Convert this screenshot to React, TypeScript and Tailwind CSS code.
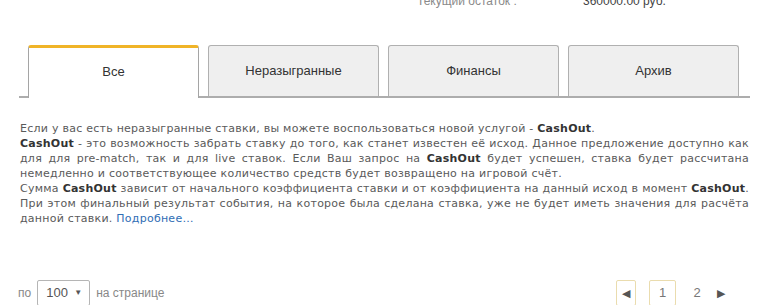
import * as React from "react"

const tabs = [
  { name: "Все", active: true },
  { name: "Неразыгранные", active: false },
  { name: "Финансы", active: false },
  { name: "Архив", active: false },
] as const

function B({ children }: { children: React.ReactNode }) {
  return <b className="font-bold text-[#333]">{children}</b>
}

export default function App() {
  return (
    <div className="h-[305px] w-[770px] overflow-hidden bg-white font-['Liberation_Sans',Arial,sans-serif]">
      {/* balance */}
      <div className="-mt-[7px] flex h-[16px] items-center text-[12px] leading-[16px]">
        <span className="ml-[417px] w-[166px] text-[#8a8a8a]">Текущий остаток :</span>
        <span className="text-[#444]">360000.00 руб.</span>
      </div>

      {/* tabs */}
      <div className="mx-[19px] mt-[37px] flex h-[52px] w-[731px] items-end gap-[9px] border-b-2 border-[#adadad] pl-[9px]">
        {tabs.map((tab) =>
          tab.active ? (
            <div
              key={tab.name}
              className="-mb-[2px] flex h-[53px] w-[171px] items-center justify-center rounded-t-[3px] border-x border-t-[3px] border-x-[#a5a5a5] border-t-[#f0b428] bg-white pb-[2px] text-[13px] text-[#333]"
            >
              {tab.name}
            </div>
          ) : (
            <div
              key={tab.name}
              className="flex h-[51px] w-[171px] items-center justify-center rounded-t-[3px] border border-b-0 border-[#b0b0b0] bg-[#efefef] text-[13px] text-[#333]"
            >
              {tab.name}
            </div>
          )
        )}
      </div>

      {/* description */}
      <div className="ml-[20px] mt-[23px] w-[729px] font-['DejaVu_Sans',Verdana,sans-serif] text-[11px] leading-[15px] tracking-[0.25px] text-[#5a5a5a]">
        <div>
          Если у вас есть неразыгранные ставки, вы можете воспользоваться новой услугой - <B>CashOut</B>.
        </div>
        <div className="text-justify [text-align-last:justify]">
          <B>CashOut</B> - это возможность забрать ставку до того, как станет известен её исход. Данное предложение доступно как
        </div>
        <div className="text-justify [text-align-last:justify]">
          для для pre-match, так и для live ставок. Если Ваш запрос на <B>CashOut</B> будет успешен, ставка будет рассчитана
        </div>
        <div>немедленно и соответствующее количество средств будет возвращено на игровой счёт.</div>
        <div className="text-justify [text-align-last:justify]">
          Сумма <B>CashOut</B> зависит от начального коэффициента ставки и от коэффициента на данный исход в момент <B>CashOut</B>.
        </div>
        <div className="text-justify [text-align-last:justify]">
          При этом финальный результат события, на которое была сделана ставка, уже не будет иметь значения для расчёта
        </div>
        <div>
          данной ставки. <a className="text-[#2f6db5]">Подробнее…</a>
        </div>
      </div>

      {/* footer */}
      <div className="mt-[54px] flex items-start justify-between pl-[18px] pr-[45px]">
        <div className="flex items-center gap-[6px] text-[12px] text-[#888]">
          <span>по</span>
          <span className="flex h-[26px] w-[53px] items-center justify-between rounded-[2px] border border-[#b5b5b5] pl-[8px] pr-[7px] text-[13px] text-[#555]">
            100
            <span className="text-[8px] text-[#555]">▼</span>
          </span>
          <span>на странице</span>
        </div>
        <div className="flex items-center text-[13px] text-[#777]">
          <span className="flex h-[26px] w-[20px] items-center justify-center rounded-[2px] border border-[#eadcae] text-[11px] text-[#555]">
            ◀
          </span>
          <span className="ml-[13px] flex h-[26px] w-[27px] items-center justify-center rounded-[2px] border border-[#eadcae]">
            1
          </span>
          <span className="ml-[16px] w-[10px] text-center">2</span>
          <span className="ml-[15px] text-[11px] text-[#555]">▶</span>
        </div>
      </div>
    </div>
  )
}
